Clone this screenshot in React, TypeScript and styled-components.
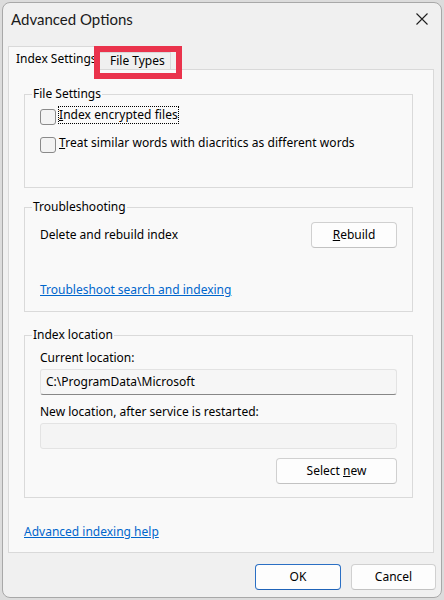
import React from 'react';
import styled, { createGlobalStyle } from 'styled-components';

const GlobalStyle = createGlobalStyle`
  html, body {
    margin: 0;
    padding: 0;
  }
  body {
    background: #dcdcdc;
    font-family: 'Segoe UI', 'Noto Sans', Lato, sans-serif;
    font-size: 12px;
    color: #000;
  }
  * {
    box-sizing: border-box;
  }
`;

const Window = styled.div`
  position: relative;
  width: 440px;
  height: 596px;
  margin: 2px;
  background: #f0f0f0;
  border: 1px solid #a8a8a8;
  border-radius: 8px;
  display: flex;
  flex-direction: column;
  overflow: hidden;
`;

const TitleBar = styled.div`
  height: 43px;
  padding: 6px 13px 0 8px;
  display: flex;
  justify-content: space-between;
  align-items: flex-start;
`;

const Title = styled.div`
  font-family: 'Segoe UI', Lato, 'Noto Sans', sans-serif;
  font-size: 15px;
  line-height: 20px;
  color: #1a1a1a;
`;

const CloseButton = styled.div`
  width: 12px;
  height: 12px;
  margin-top: 4px;
  display: flex;
`;

const TabStrip = styled.div`
  position: relative;
  z-index: 1;
  height: 24px;
  padding-left: 5px;
  display: flex;
  align-items: flex-end;
`;

const Tab = styled.div<{ $active?: boolean; $width: number }>`
  width: ${(p) => p.$width}px;
  height: ${(p) => (p.$active ? 24 : 17)}px;
  margin-bottom: ${(p) => (p.$active ? 0 : 1)}px;
  padding-left: ${(p) => (p.$active ? 7 : 11)}px;
  background: ${(p) => (p.$active ? '#f9f9f9' : '#f0f0f0')};
  border: 1px solid #d9d9d9;
  border-bottom: none;
  display: flex;
  align-items: center;
  line-height: 16px;
  white-space: nowrap;
  overflow: hidden;
`;

const Panel = styled.div`
  margin: -1px 7px 0 5px;
  height: 484px;
  background: #f9f9f9;
  border: 1px solid #d9d9d9;
  padding: 24px 20px 0 15px;
  display: flex;
  flex-direction: column;
`;

const Group = styled.div<{ $height: number; $gap?: number }>`
  position: relative;
  height: ${(p) => p.$height}px;
  margin-top: ${(p) => p.$gap ?? 0}px;
  border: 1px solid #dadada;
  padding: 0 15px;
  display: flex;
  flex-direction: column;
`;

const Caption = styled.div`
  position: absolute;
  top: -9px;
  left: 7px;
  padding: 0 1px;
  background: #f9f9f9;
  line-height: 16px;
`;

const CheckList = styled.div`
  padding-top: 12px;
  display: flex;
  flex-direction: column;
  gap: 12px;
`;

const CheckRow = styled.label`
  height: 16px;
  display: flex;
  align-items: flex-start;
  line-height: 16px;
`;

const CheckBox = styled.span`
  width: 16px;
  height: 16px;
  margin-top: 2px;
  margin-right: 3px;
  border: 1px solid #8a8a8a;
  border-radius: 3px;
  background: #f3f3f3;
  flex-shrink: 0;
`;

const FocusText = styled.span<{ $focused?: boolean }>`
  display: inline-block;
  line-height: 16px;
  letter-spacing: 0.05px;
  outline: ${(p) => (p.$focused ? '1px dotted #000' : 'none')};
`;

const ActionRow = styled.div<{ $top?: number; $justify?: string }>`
  margin-top: ${(p) => p.$top ?? 0}px;
  display: flex;
  align-items: center;
  justify-content: ${(p) => p.$justify ?? 'space-between'};
  line-height: 16px;
`;

const Button = styled.button<{ $width: number; $primary?: boolean }>`
  width: ${(p) => p.$width}px;
  height: 26px;
  padding: 0 0 1px;
  font: inherit;
  color: #000;
  background: #fdfdfd;
  border: 1px solid ${(p) => (p.$primary ? '#2a6fc4' : '#d0d0d0')};
  border-bottom-color: ${(p) => (p.$primary ? '#1f63b8' : '#c2c2c2')};
  border-radius: 4px;
  line-height: 16px;
  cursor: default;
`;

const Link = styled.a<{ $top: number }>`
  align-self: flex-start;
  margin-top: ${(p) => p.$top}px;
  line-height: 16px;
  color: #0066cc;
  text-decoration: underline;
  cursor: pointer;
`;

const FieldLabel = styled.div<{ $top: number }>`
  margin-top: ${(p) => p.$top}px;
  line-height: 16px;
`;

const TextBox = styled.div<{ $disabled?: boolean }>`
  margin-top: 3px;
  height: 26px;
  padding: 0 5px 1px;
  display: flex;
  align-items: center;
  background: ${(p) => (p.$disabled ? '#f4f4f4' : '#f6f6f6')};
  border: 1px solid #e3e3e3;
  border-bottom-color: ${(p) => (p.$disabled ? '#e3e3e3' : '#878787')};
  border-radius: 3px;
  line-height: 16px;
`;

const Footer = styled.div`
  margin-top: 11px;
  padding-right: 5px;
  display: flex;
  justify-content: flex-end;
  gap: 10px;
`;

const Highlight = styled.div`
  position: absolute;
  left: 91px;
  top: 43px;
  width: 88px;
  height: 33px;
  border: 6px solid #ea334c;
  z-index: 2;
  pointer-events: none;
`;

const CloseIcon = () => (
  <svg width="12" height="12" viewBox="0 0 12 12">
    <path d="M0.5 0.5 L11.5 11.5 M11.5 0.5 L0.5 11.5" stroke="#1f1f1f" strokeWidth="1.1" fill="none" />
  </svg>
);

const App = () => {
  return (
    <>
      <GlobalStyle />
      <Window>
        <TitleBar>
          <Title>Advanced Options</Title>
          <CloseButton>
            <CloseIcon />
          </CloseButton>
        </TitleBar>

        <TabStrip>
          <Tab $active $width={90}>Index Settings</Tab>
          <Tab $width={73}>File Types</Tab>
        </TabStrip>

        <Panel>
          <Group $height={94}>
            <Caption>File Settings</Caption>
            <CheckList>
              <CheckRow>
                <CheckBox />
                <FocusText $focused>
                  <u>I</u>ndex encrypted files
                </FocusText>
              </CheckRow>
              <CheckRow>
                <CheckBox />
                <FocusText>
                  <u>T</u>reat similar words with diacritics as different words
                </FocusText>
              </CheckRow>
            </CheckList>
          </Group>

          <Group $height={105} $gap={19}>
            <Caption>Troubleshooting</Caption>
            <ActionRow $top={14}>
              <span>Delete and rebuild index</span>
              <Button $width={86}>
                <u>R</u>ebuild
              </Button>
            </ActionRow>
            <Link $top={34}>Troubleshoot search and indexing</Link>
          </Group>

          <Group $height={163} $gap={23}>
            <Caption>Index location</Caption>
            <FieldLabel $top={14}>Current location:</FieldLabel>
            <TextBox>C:\ProgramData\Microsoft</TextBox>
            <FieldLabel $top={9}>New location, after service is restarted:</FieldLabel>
            <TextBox $disabled />
            <ActionRow $top={9} $justify="flex-end">
              <Button $width={121}>
                Select <u>n</u>ew
              </Button>
            </ActionRow>
          </Group>

          <Link $top={26}>Advanced indexing help</Link>
        </Panel>

        <Footer>
          <Button $width={86} $primary>OK</Button>
          <Button $width={85}>Cancel</Button>
        </Footer>

        <Highlight />
      </Window>
    </>
  );
};

export default App;
